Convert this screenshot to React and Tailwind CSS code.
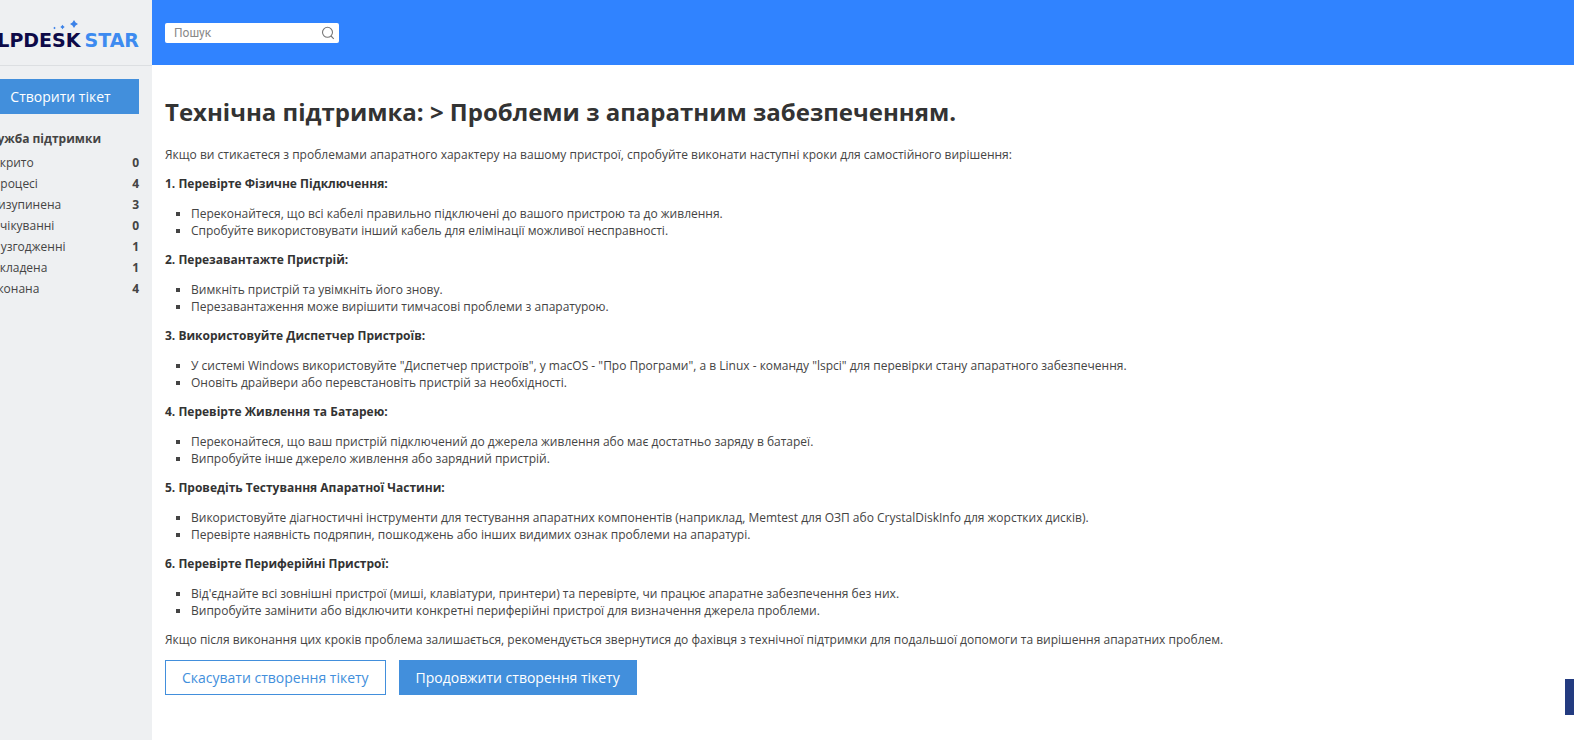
const statuses = [
  { label: 'Відкрито', count: 0 },
  { label: 'В процесі', count: 4 },
  { label: 'Призупинена', count: 3 },
  { label: 'В очікуванні', count: 0 },
  { label: 'На узгодженні', count: 1 },
  { label: 'Відкладена', count: 1 },
  { label: 'Виконана', count: 4 },
]

const sections = [
  {
    title: '1. Перевірте Фізичне Підключення:',
    items: [
      'Переконайтеся, що всі кабелі правильно підключені до вашого пристрою та до живлення.',
      'Спробуйте використовувати інший кабель для елімінації можливої несправності.',
    ],
  },
  {
    title: '2. Перезавантажте Пристрій:',
    items: [
      'Вимкніть пристрій та увімкніть його знову.',
      'Перезавантаження може вирішити тимчасові проблеми з апаратурою.',
    ],
  },
  {
    title: '3. Використовуйте Диспетчер Пристроїв:',
    items: [
      'У системі Windows використовуйте "Диспетчер пристроїв", у macOS - "Про Програми", а в Linux - команду "lspci" для перевірки стану апаратного забезпечення.',
      'Оновіть драйвери або перевстановіть пристрій за необхідності.',
    ],
  },
  {
    title: '4. Перевірте Живлення та Батарею:',
    items: [
      'Переконайтеся, що ваш пристрій підключений до джерела живлення або має достатньо заряду в батареї.',
      'Випробуйте інше джерело живлення або зарядний пристрій.',
    ],
  },
  {
    title: '5. Проведіть Тестування Апаратної Частини:',
    items: [
      'Використовуйте діагностичні інструменти для тестування апаратних компонентів (наприклад, Memtest для ОЗП або CrystalDiskInfo для жорстких дисків).',
      'Перевірте наявність подряпин, пошкоджень або інших видимих ознак проблеми на апаратурі.',
    ],
  },
  {
    title: '6. Перевірте Периферійні Пристрої:',
    items: [
      "Від'єднайте всі зовнішні пристрої (миші, клавіатури, принтери) та перевірте, чи працює апаратне забезпечення без них.",
      'Випробуйте замінити або відключити конкретні периферійні пристрої для визначення джерела проблеми.',
    ],
  },
]

function Logo() {
  return (
    <a href="#" className="flex flex-col items-end">
      <svg viewBox="0 0 26 10" className="mr-15 h-[10px] w-[26px]" fill="#3b82e8" aria-hidden="true">
        <path d="M21 0l1.600 2.400L25 4l-2.400 1.600L21 8l-1.600-2.400L17 4l2.400-1.600z" />
        <path d="M9.500 4.800l.9 1.300 1.300.9-1.300.9-.9 1.300-.9-1.300-1.300-.9 1.300-.9z" />
        <path d="M1.500 6.800l1.200 1.200-1.200 1.200L.3 8z" />
      </svg>
      <span className="flex gap-1 font-['DejaVu_Sans',sans-serif] text-[19px] leading-5 font-bold whitespace-nowrap">
        <span className="text-[#0d0a48]">HELPDESK</span>
        <span className="text-[#3d8bf0]">STAR</span>
      </span>
    </a>
  )
}

function Sidebar() {
  return (
    <aside className="flex w-38 shrink-0 justify-end overflow-hidden bg-[#eef0f2]">
      <div className="w-[183px] shrink-0">
        <div className="flex h-[66px] flex-col items-end border-b border-[#dcdfe2] pt-5 pr-[13px]">
          <Logo />
        </div>
        <div className="px-[13px] pt-[13px]">
          <button className="h-[35px] w-full bg-[#428fdc] text-sm text-white">Створити тікет</button>
          <h2 className="mt-[15px] text-xs leading-5 font-bold text-[#444]">Служба підтримки</h2>
          <ul className="mt-[3px]">
            {statuses.map((s) => (
              <li key={s.label} className="flex justify-between text-xs leading-[21px] text-[#444]">
                <span>{s.label}</span>
                <span className="font-bold">{s.count}</span>
              </li>
            ))}
          </ul>
        </div>
      </div>
    </aside>
  )
}

function Header() {
  return (
    <header className="flex h-[65px] items-center bg-[#3083ff] px-[13px]">
      <label className="flex h-5 w-[174px] items-center rounded-xs bg-white pr-1 pl-[9px]">
        <input
          type="text"
          placeholder="Пошук"
          aria-label="Пошук"
          className="min-w-0 flex-1 font-['Roboto',sans-serif] text-xs outline-none placeholder:text-[#888]"
        />
        <svg viewBox="0 0 14 14" className="size-[14px]" fill="none" stroke="#777" strokeWidth="1.100" aria-hidden="true">
          <circle cx="6.500" cy="6.300" r="5" />
          <path d="M10 10l2.800 2.800" />
        </svg>
      </label>
    </header>
  )
}

function Article() {
  return (
    <main className="px-[13px] pt-[29px] pb-11 text-xs leading-[17px] text-[#444]">
      <h1 className="text-2xl leading-9 font-bold text-[#333]">
        Технічна підтримка: &gt; Проблеми з апаратним забезпеченням.
      </h1>
      <p className="mt-4">
        Якщо ви стикаєтеся з проблемами апаратного характеру на вашому пристрої, спробуйте виконати наступні кроки для самостійного вирішення:
      </p>
      {sections.map((section) => (
        <section key={section.title} className="mt-3">
          <h3 className="font-bold text-[#333]">{section.title}</h3>
          <ul className="mt-[13px] list-[square] pl-[26px]">
            {section.items.map((item) => (
              <li key={item}>{item}</li>
            ))}
          </ul>
        </section>
      ))}
      <p className="mt-3">
        Якщо після виконання цих кроків проблема залишається, рекомендується звернутися до фахівця з технічної підтримки для подальшої допомоги та вирішення апаратних проблем.
      </p>
      <div className="mt-3 flex gap-[13px] text-sm">
        <button className="h-[35px] border border-[#428fdc] px-4 text-[#428fdc]">Скасувати створення тікету</button>
        <button className="h-[35px] border border-[#428fdc] bg-[#428fdc] px-4 text-white">Продовжити створення тікету</button>
      </div>
    </main>
  )
}

export default function App() {
  return (
    <div className="flex min-h-screen bg-white font-['Open_Sans',sans-serif]">
      <Sidebar />
      <div className="min-w-0 flex-1">
        <Header />
        <Article />
      </div>
      <button aria-label="Чат" className="fixed right-0 bottom-[25px] h-9 w-[9px] bg-[#233b80]" />
    </div>
  )
}
